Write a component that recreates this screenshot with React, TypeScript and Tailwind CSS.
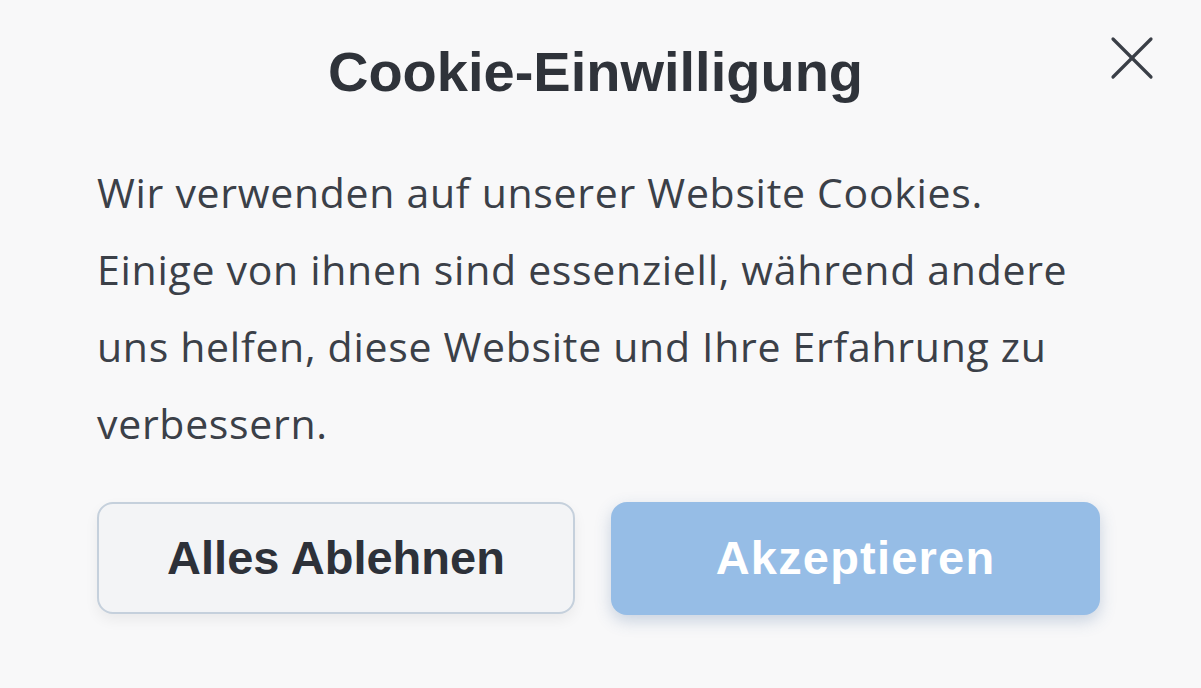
import React from "react";

export default function App() {
  return (
    <div className="relative flex h-[688px] w-full flex-col bg-[#f8f8f9] pl-[97px] pr-[101px] pt-[40px]">
      <button
        aria-label="Schließen"
        className="absolute right-[47px] top-[36px] flex h-[44px] w-[44px] items-center justify-center text-[#3a3f47]"
      >
        <svg width="44" height="44" viewBox="0 0 44 44" fill="none" stroke="currentColor" strokeWidth="3.2" strokeLinecap="round">
          <path d="M3 3 L41 41" />
          <path d="M41 3 L3 41" />
        </svg>
      </button>
      <h1 className="text-center font-['Liberation_Sans',Arial,sans-serif] text-[56px] font-bold leading-[64px] text-[#2f333a] pr-[6px]">
        Cookie-Einwilligung
      </h1>
      <p className="mt-[50px] whitespace-nowrap font-['Open_Sans',sans-serif] text-[41px] leading-[77px] tracking-[0.7px] text-[#3b4048]">
        Wir verwenden auf unserer Website Cookies.
        <br />
        Einige von ihnen sind essenziell, während andere
        <br />
        uns helfen, diese Website und Ihre Erfahrung zu
        <br />
        verbessern.
      </p>
      <div className="mt-[40px] flex gap-[36px]">
        <button className="flex h-[112px] w-[478px] items-center justify-center rounded-[16px] border-2 border-[#c5d0dc] bg-[#f3f4f6] font-['Liberation_Sans',Arial,sans-serif] text-[47px] font-bold text-[#2d3139] shadow-[0_6px_14px_rgba(0,0,0,0.06)]">
          Alles Ablehnen
        </button>
        <button className="flex h-[113px] flex-1 items-center justify-center rounded-[16px] bg-[#96bde6] font-['Liberation_Sans',Arial,sans-serif] text-[47px] font-bold tracking-[1.2px] text-white shadow-[0_6px_16px_rgba(60,100,150,0.25)]">
          Akzeptieren
        </button>
      </div>
    </div>
  );
}
